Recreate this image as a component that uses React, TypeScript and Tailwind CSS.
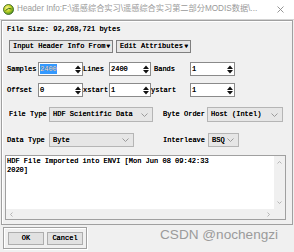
import React from "react";

function Spinner() {
  return (
    <svg width="6" height="9" viewBox="0 0 6 9" className="shrink-0">
      <polygon points="0,4 3,0.5 6,4" fill="#111" />
      <polygon points="0,5 3,8.5 6,5" fill="#111" />
    </svg>
  );
}

function Chevron({ color = "#9a9a9a" }: { color?: string }) {
  return (
    <svg width="7" height="4" viewBox="0 0 7 4" className="shrink-0">
      <polyline points="0.5,0.5 3.5,3.5 6.5,0.5" fill="none" stroke={color} strokeWidth="1" />
    </svg>
  );
}

function SpinBox({ value, selected, className }: { value: string; selected?: boolean; className: string }) {
  return (
    <div className={"h-[14px] bg-white border border-[#8a8a8a] flex items-center pl-[1px] pr-[1px] " + className}>
      <span className={selected ? "bg-[#3399ff] text-white leading-[10px]" : "leading-[10px]"}>{value}</span>
      <div className="ml-auto">
        <Spinner />
      </div>
    </div>
  );
}

function Drop({ value, className }: { value: string; className: string }) {
  return (
    <div className={"border border-[#b5b5b5] bg-[#e6e6e6] flex items-center pl-[3px] pr-[4px] " + className}>
      <span>{value}</span>
      <div className="ml-auto">
        <Chevron />
      </div>
    </div>
  );
}

export default function App() {
  return (
    <div className="relative w-[294px] h-[252px] bg-[#f0f0f0] overflow-hidden font-['Liberation_Mono',monospace] text-[7px] text-black [text-shadow:0_0_0.3px_#000]">
      {/* title bar */}
      <div className="h-[20px] bg-white border-b border-[#d4d4d4] flex items-center pl-[3px] [text-shadow:none]">
        <svg width="11" height="11" viewBox="0 0 11 11" className="shrink-0">
          <defs>
            <radialGradient id="g" cx="0.4" cy="0.35" r="0.7">
              <stop offset="0" stopColor="#fff6a0" />
              <stop offset="0.45" stopColor="#c8d62a" />
              <stop offset="1" stopColor="#3f8a1c" />
            </radialGradient>
          </defs>
          <circle cx="5.5" cy="5.5" r="5" fill="url(#g)" stroke="#2f5a17" strokeWidth="0.8" />
          <path d="M2.5 6.5 Q5.5 3 8.5 5" stroke="#2f6a12" strokeWidth="1" fill="none" />
        </svg>
        <span className="ml-[3px] whitespace-nowrap font-['Liberation_Sans','Noto_Sans_CJK_SC',sans-serif] text-[8.2px] text-[#9a9a9a]">
          Header Info:F:\遥感综合实习\遥感综合实习第二部分MODIS数据\...
        </span>
        <svg width="7" height="7" viewBox="0 0 7 7" className="ml-auto mr-[10px] shrink-0">
          <path d="M0.5 0.5 L6.5 6.5 M6.5 0.5 L0.5 6.5" stroke="#8a8a8a" strokeWidth="0.9" />
        </svg>
      </div>

      {/* main panel */}
      <div className="ml-[1px] w-[292px] h-[205px] border border-[#a0a0a0] shadow-[inset_1px_1px_0_#ffffff]">
        <div className="pl-[5px] pt-[4px] flex flex-col">
          <div className="leading-[9px]">File Size: 92,268,721 bytes</div>

          <div className="mt-[6px] ml-[2px] flex gap-[3px]">
            <div className="h-[13px] w-[104px] border border-[#7f7f7f] bg-[#e6e6e6] flex items-center pl-[3px] pr-[2px]">
              <span>Input Header Info From</span>
              <span className="ml-auto text-[6px]">▼</span>
            </div>
            <div className="h-[13px] w-[75px] border border-[#7f7f7f] bg-[#e6e6e6] flex items-center pl-[3px] pr-[2px]">
              <span>Edit Attributes</span>
              <span className="ml-auto text-[6px]">▼</span>
            </div>
          </div>

          <div className="mt-[9px] flex items-center h-[14px]">
            <span className="w-[31px]">Samples</span>
            <SpinBox value="2400" selected className="w-[45px]" />
            <span className="w-[26px]">Lines</span>
            <SpinBox value="2400" className="w-[42px]" />
            <span className="w-[39px] pl-[3px]">Bands</span>
            <SpinBox value="1" className="w-[45px]" />
          </div>

          <div className="mt-[7px] flex items-center h-[14px]">
            <span className="w-[31px]">Offset</span>
            <SpinBox value="0" className="w-[45px]" />
            <span className="w-[26px]">xstart</span>
            <SpinBox value="1" className="w-[42px]" />
            <span className="w-[39px] pl-[0px]">ystart</span>
            <SpinBox value="1" className="w-[45px]" />
          </div>

          <div className="mt-[10px] flex items-center h-[15px]">
            <span className="w-[42px] pl-[2px]">File Type</span>
            <Drop value="HDF Scientific Data" className="w-[104px] h-[15px]" />
            <span className="ml-[10px] w-[44px]">Byte Order</span>
            <Drop value="Host (Intel)" className="w-[76px] h-[15px]" />
          </div>

          <div className="mt-[11px] flex items-center h-[14px]">
            <span className="w-[42px]">Data Type</span>
            <Drop value="Byte" className="w-[85px] h-[14px]" />
            <span className="ml-[29px] w-[45px]">Interleave</span>
            <Drop value="BSQ" className="w-[31px] h-[14px]" />
          </div>

          <div className="mt-[8px] -ml-[2px] w-[281px] h-[65px] border border-[#a0a0a0] bg-white flex flex-col">
            <div className="flex flex-1 min-h-0">
              <div className="flex-1 pl-[1px] pt-[1px] leading-[9px]">
                HDF File Imported into ENVI [Mon Jun 08 09:42:33
                <br />
                2020]
              </div>
              <div className="w-[11px] bg-[#f0f0f0] flex flex-col justify-between items-center py-[5px]">
                <svg width="5" height="3" viewBox="0 0 5 3"><polyline points="0.5,2.5 2.5,0.5 4.5,2.5" fill="none" stroke="#a6a6a6" strokeWidth="0.8" /></svg>
                <svg width="5" height="3" viewBox="0 0 5 3"><polyline points="0.5,0.5 2.5,2.5 4.5,0.5" fill="none" stroke="#a6a6a6" strokeWidth="0.8" /></svg>
              </div>
            </div>
            <div className="h-[10px] flex bg-[#f0f0f0]">
              <div className="flex-1 flex justify-between items-center px-[4px]">
                <svg width="3" height="5" viewBox="0 0 3 5"><polyline points="2.5,0.5 0.5,2.5 2.5,4.5" fill="none" stroke="#a6a6a6" strokeWidth="0.8" /></svg>
                <svg width="3" height="5" viewBox="0 0 3 5"><polyline points="0.5,0.5 2.5,2.5 0.5,4.5" fill="none" stroke="#a6a6a6" strokeWidth="0.8" /></svg>
              </div>
              <div className="w-[11px]" />
            </div>
          </div>
        </div>
      </div>

      {/* ok / cancel group */}
      <div className="ml-[3px] mt-[2px] w-[84px] h-[22px] border border-[#a0a0a0] shadow-[inset_1px_1px_0_#ffffff,1px_1px_0_#ffffff] flex items-center gap-[3px] pl-[4px]">
        <div className="w-[36px] h-[13px] border border-[#adadad] bg-[#e1e1e1] flex items-center justify-center">OK</div>
        <div className="w-[36px] h-[13px] border border-[#adadad] bg-[#e1e1e1] flex items-center justify-center">Cancel</div>
      </div>

      {/* watermark */}
      <div className="absolute left-[160px] top-[227px] font-['Liberation_Sans',sans-serif] text-[13.6px] leading-[16px] text-[#9b9b9b] whitespace-nowrap [text-shadow:none]">
        CSDN @nochengzi
      </div>
    </div>
  );
}
